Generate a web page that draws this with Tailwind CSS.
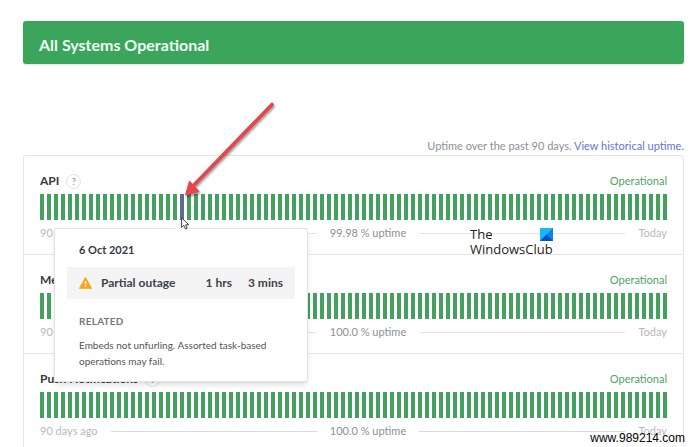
<!DOCTYPE html>
<html lang="en">
<head>
  <meta charset="UTF-8" />
  <meta name="viewport" content="width=device-width, initial-scale=1.0" />
  <title>System Status</title>
  <script src="https://cdn.jsdelivr.net/npm/@tailwindcss/browser@4"></script>
</head>
<body class="bg-white font-[Lato,sans-serif] text-[11px] leading-[18px] text-[#8a9199]">
  <div class="relative h-screen overflow-hidden pl-[23px] pr-4 pt-[21px]">

    <!-- Overall status -->
    <header class="flex h-[43px] items-center rounded-[3px] bg-[#3ba55c] px-4 shadow-sm">
      <h1 class="pt-1 text-base font-bold text-[#f0fff4]">All Systems Operational</h1>
    </header>

    <p class="mt-[73px] text-right">
      Uptime over the past 90 days.
      <a href="#history" class="text-[#6a70dc]">View historical uptime.</a>
    </p>

    <main class="rounded-[3px] border border-[#e6e6e6]">
      <!-- API -->
      <section class="relative border-b border-[#e6e6e6] px-4 pt-4 pb-3">
        <div class="flex h-[18px] items-center">
          <h2 class="text-xs font-bold text-[#36393f]">API</h2>
          <button type="button" aria-label="About API" class="ml-2 flex size-[13px] items-center justify-center rounded-full text-[9px] leading-none text-[#888] outline outline-[#e0e0e0]">?</button>
          <span class="ml-auto text-[#4fa468]">Operational</span>
        </div>
        <div class="bars mt-1 flex h-[26px] justify-between" data-outage="20"></div>
        <div class="mt-1 flex items-center gap-[13px]">
          <span class="text-[#b5b9be]">90 days ago</span>
          <hr class="flex-1 border-[#e3e5e6]" />
          <span>99.98 % uptime</span>
          <hr class="flex-1 border-[#e3e5e6]" />
          <span class="text-[#b5b9be]">Today</span>
        </div>

        <!-- Day tooltip -->
        <div class="absolute top-[72px] left-[30px] z-10 w-[254px] rounded-[2px] border border-[#e3e3e3] bg-white px-3 pt-3 pb-3 shadow-md">
          <svg class="absolute -top-[8px] left-[119px] h-[9px] w-4" viewBox="0 0 16 9">
            <path d="M0 8 L8 1 L16 8" fill="#fff" stroke="#e3e3e3" />
            <path d="M1 8.5H15" stroke="#fff" />
          </svg>
          <h3 class="px-3 font-bold text-[#36393f]">6 Oct 2021</h3>
          <div class="mt-2 flex h-8 items-center bg-[#f4f4f5] px-3 text-xs font-bold text-[#3f4248]">
            <svg class="mr-[9px] h-3 w-[13px]" viewBox="0 0 13 12">
              <path d="M6.5 .8 L12.3 11.2 H.7Z" fill="#faa61a" stroke="#faa61a" stroke-width="1.2" stroke-linejoin="round" />
              <path d="M6.5 4V7.4M6.5 8.7V10.1" stroke="#fff" stroke-width="1.3" />
            </svg>
            <span>Partial outage</span>
            <span class="ml-auto">1 hrs</span>
            <span class="ml-4">3 mins</span>
          </div>
          <div class="px-3">
            <h4 class="mt-[13px] text-[10px] font-bold tracking-wide text-[#72767d]">RELATED</h4>
            <p class="mt-[7px] text-[10px] leading-4 text-[#4f545c]">Embeds not unfurling. Assorted task-based operations may fail.</p>
          </div>
        </div>
      </section>

      <!-- Media Proxy -->
      <section class="border-b border-[#e6e6e6] px-4 pt-4 pb-3">
        <div class="flex h-[18px] items-center">
          <h2 class="text-xs font-bold text-[#36393f]">Media Proxy</h2>
          <span class="ml-auto text-[#4fa468]">Operational</span>
        </div>
        <div class="bars mt-1 flex h-[26px] justify-between"></div>
        <div class="mt-1 flex items-center gap-[13px]">
          <span class="text-[#b5b9be]">90 days ago</span>
          <hr class="flex-1 border-[#e3e5e6]" />
          <span>100.0 % uptime</span>
          <hr class="flex-1 border-[#e3e5e6]" />
          <span class="text-[#b5b9be]">Today</span>
        </div>
      </section>

      <!-- Push Notifications -->
      <section class="px-4 pt-4 pb-3">
        <div class="flex h-[18px] items-center">
          <h2 class="text-xs font-bold text-[#36393f]">Push Notifications</h2>
          <button type="button" aria-label="About Push Notifications" class="ml-2 flex size-[13px] items-center justify-center rounded-full text-[9px] leading-none text-[#888] outline outline-[#e0e0e0]">?</button>
          <span class="ml-auto text-[#4fa468]">Operational</span>
        </div>
        <div class="bars mt-1 flex h-[26px] justify-between"></div>
        <div class="mt-1 flex items-center gap-[13px]">
          <span class="text-[#b5b9be]">90 days ago</span>
          <hr class="flex-1 border-[#d8dadb]" />
          <span>100.0 % uptime</span>
          <hr class="flex-1 border-[#d8dadb]" />
          <span class="text-[#b5b9be]">Today</span>
        </div>
      </section>
    </main>

    <!-- Arrow pointing at the outage day -->
    <svg class="absolute top-[98px] left-[180px] z-20 h-[102px] w-[98px] drop-shadow-[1px_2px_1px_rgb(0_0_0/0.4)]" viewBox="0 0 98 102">
      <path d="M92 6.5 L13 88" stroke="#e8454a" stroke-width="3.6" stroke-linecap="round" />
      <path d="M5.5 97 L9.5 83 L12 86 L15 89 L19 93.5Z" fill="#e8454a" stroke="#e8454a" stroke-linejoin="round" />
    </svg>

    <!-- Mouse pointer -->
    <svg class="absolute top-[217px] left-[181px] z-20 h-[13px] w-[9px]" viewBox="0 0 9 13">
      <path d="M.6 .9V10.4L2.8 8.4L4.4 12L6.1 11.2L4.6 7.8H7.8Z" fill="#fff" stroke="#333" stroke-width=".9" stroke-linejoin="round" />
    </svg>

    <!-- Site marks -->
    <div class="absolute top-[227px] left-[470px] z-20 font-['Open_Sans',sans-serif] text-[13px] leading-[15px] text-[#222]">
      <div class="flex items-center justify-between">
        <span>The</span>
        <svg class="size-[13px]" viewBox="0 0 13 13">
          <path d="M0 0H13V13H0Z" fill="#0a84e8" />
          <path d="M0 0H13L0 13Z" fill="#16b9f5" />
          <path d="M0 13L6.5 6.5L13 13Z" fill="#0b4fc4" />
        </svg>
      </div>
      <div>WindowsClub</div>
    </div>
    <div class="absolute right-[15px] bottom-0 z-20 font-['Liberation_Sans',sans-serif] text-[12px] text-black">www.989214.com</div>
  </div>

  <script>
    // one bar per day, oldest first
    document.querySelectorAll('.bars').forEach(row => {
      for (let day = 0; day < 90; day++) {
        const bar = document.createElement('span');
        bar.className = String(day) === row.dataset.outage ? 'w-1 bg-[#5b6b94]' : 'w-1 bg-[#43a05f]';
        row.appendChild(bar);
      }
    });
  </script>
</body>
</html>
